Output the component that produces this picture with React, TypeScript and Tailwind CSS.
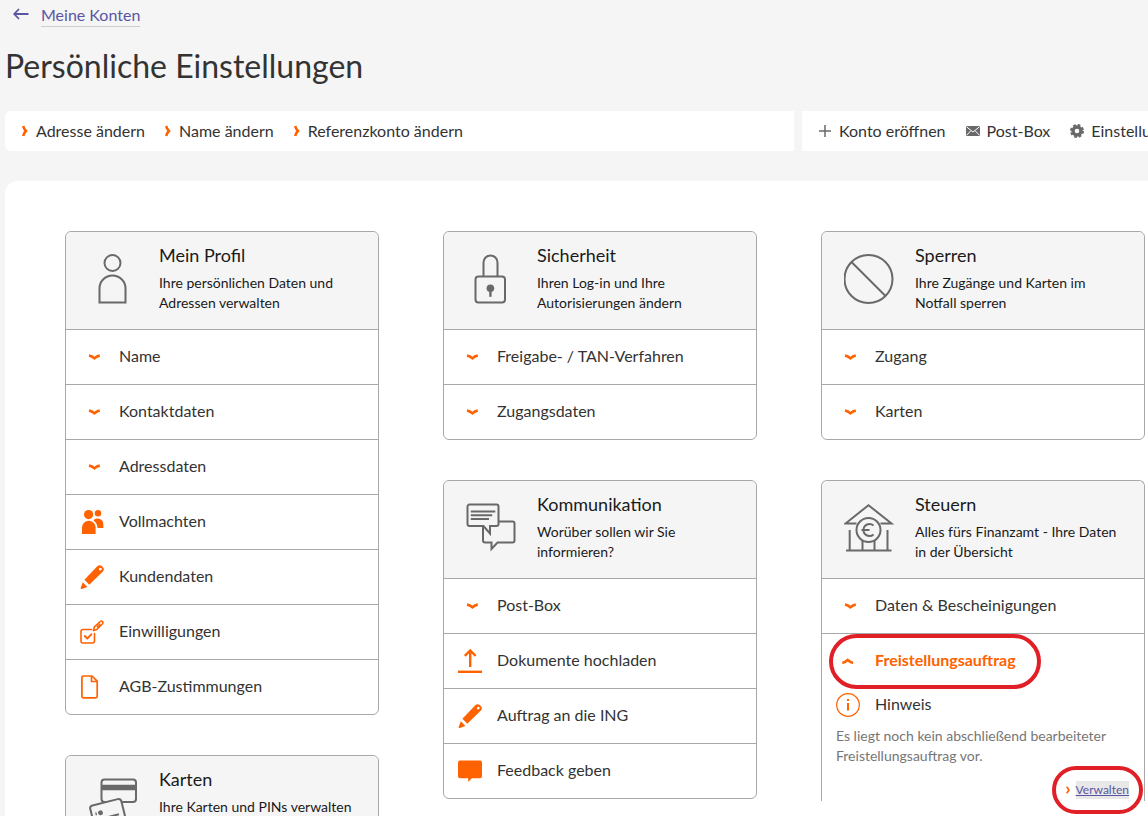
import { useState, type ReactNode } from "react";

function Pencil() {
	return (
		<svg viewBox="0 0 24 24" className="size-6 fill-[#ff6200]">
			<path fillRule="evenodd" d="M17.300 1.200c1.400-1.300 3.200-1.300 4.600-.1l.9.900c1.400 1.400 1.400 3.200.1 4.600L9.300 19.800l-4.900-5zM19.400 3.200a1.500 1.500 0 0 0-.1 2c.6.6 1.500.5 2-.1.500-.5.600-1.300.1-1.800-.6-.6-1.400-.7-2-.1z" />
			<path d="M2.800 17.300l4.600 4.600-5.500 2c-.9.300-1.500-.3-1.200-1.200z" />
		</svg>
	);
}

function People() {
	return (
		<svg viewBox="0 0 24 24" className="size-6 fill-[#ff6200]">
			<circle cx="8.600" cy="4.600" r="4.600" />
			<circle cx="18" cy="3.200" r="3.200" />
			<path d="M2 24v-6.500a6.800 6.800 0 0 1 13.600 0V24z" />
			<path d="M14 9.800c1-.9 2.400-1.400 3.800-1.400a5.500 5.500 0 0 1 5.500 5.500V18h-5.800c0-3.300-1.400-5.900-3.900-7.300z" />
		</svg>
	);
}

function Consent() {
	return (
		<svg viewBox="0 0 24 24" className="size-6 fill-none stroke-[#ff6200]" strokeWidth="1.600" strokeLinejoin="round" strokeLinecap="round">
			<path d="M11.500 9.500H3a2 2 0 0 0-2 2V21a2 2 0 0 0 2 2h9.500a2 2 0 0 0 2-2v-7.500" />
			<path d="M4.800 16l2.500 2.500 4-4.200" strokeWidth="1.900" />
			<path d="M13.400 10.600l1-3.800 5.900-5.300c.7-.6 1.500-.6 2.200 0 .7.700.7 1.500 0 2.200l-5.700 5.800z" />
			<path d="M17.300 6.800l2.500-2.400" />
		</svg>
	);
}

function Page() {
	return (
		<svg viewBox="0 0 24 24" className="size-6 fill-none stroke-[#ff6200]" strokeWidth="1.700" strokeLinejoin="round">
			<path d="M3.500 1H12l5.200 5.200v15c0 1-.6 1.600-1.600 1.600H3.500c-1 0-1.600-.6-1.600-1.600V2.600C1.900 1.600 2.500 1 3.500 1z" />
			<path d="M11.500 1.200v5.300h5.500" />
		</svg>
	);
}

function Upload() {
	return (
		<svg viewBox="0 0 24 24" className="size-6 fill-none stroke-[#ff6200]" strokeWidth="2.400">
			<path d="M12.200 18V1.500M6.800 6.800l5.400-5.300 5.400 5.300" />
			<path d="M0 22.800h24.500" />
		</svg>
	);
}

function Bubble() {
	return (
		<svg viewBox="0 0 24 24" className="size-6 fill-[#ff6200]">
			<path d="M2 1.500h20a2 2 0 0 1 2 2v13.800a2 2 0 0 1-2 2h-8.200L10.200 23v-3.700H2a2 2 0 0 1-2-2V3.500a2 2 0 0 1 2-2z" />
		</svg>
	);
}

function Info() {
	return (
		<svg viewBox="0 0 24 24" className="size-6 fill-none stroke-[#ff6200]">
			<circle cx="12" cy="12" r="11.300" strokeWidth="1.200" />
			<path d="M12 10v7.500M12 6v2" strokeWidth="2" />
		</svg>
	);
}

function Chevron({ up }: { up?: boolean }) {
	return (
		<svg viewBox="0 0 24 24" className="size-6 fill-none stroke-[#ff6200]" strokeWidth="2.600">
			{up ? <path d="M6.300 14c2.200-.5 3.800-1.500 5.400-2.900 1.600 1.400 3.200 2.400 5.400 2.900" /> : <path d="M9 10.600c2.200.5 3.800 1.400 5.400 2.700 1.600-1.300 3.200-2.200 5.400-2.700" />}
		</svg>
	);
}

function Arrow() {
	return (
		<svg viewBox="0 0 6 12" className="h-3 w-[6px] shrink-0 fill-none stroke-[#ff6200]" strokeWidth="2.600">
			<path d="M1.200 1c.4 2 1.200 3.500 2.700 5-1.500 1.500-2.300 3-2.700 5" />
		</svg>
	);
}

const headIcon = "size-[50px] shrink-0 fill-none stroke-[#696969]";

const icons = {
	profile: (
		<svg viewBox="0 0 50 50" className={headIcon} strokeWidth="2">
			<circle cx="24.500" cy="9" r="8" />
			<path d="M11.500 48.500V34.500a13 13 0 0 1 26 0v14z" />
		</svg>
	),
	lock: (
		<svg viewBox="0 0 50 50" className={headIcon} strokeWidth="2">
			<rect x="9.500" y="22.500" width="29.500" height="26" rx="3" />
			<path d="M17.500 22V8.500a7 7 0 0 1 14 0V22" />
			<circle cx="24.400" cy="34.300" r="3.800" fill="#696969" stroke="none" />
			<path d="M24.400 35v7.800" strokeWidth="2.400" />
		</svg>
	),
	block: (
		<svg viewBox="0 0 50 50" className={headIcon} strokeWidth="2">
			<circle cx="24.500" cy="25" r="24" />
			<path d="M7.500 8l34 34" />
		</svg>
	),
	chat: (
		<svg viewBox="0 0 50 50" className={headIcon} strokeWidth="2">
			<path d="M3.500 1.500h27a2 2 0 0 1 2 2v17.500a2 2 0 0 1-2 2h-6.500v7.500L17.500 23h-14a2 2 0 0 1-2-2V3.500a2 2 0 0 1 2-2z" />
			<path d="M33 18.500h13.500a2 2 0 0 1 2 2V37.500a2 2 0 0 1-2 2H31.500l-6 6.500v-6.500h-6.500a2 2 0 0 1-2-2V23.500" />
			<path d="M4.800 8.500h24.500M4.800 12.300h21.400M4.800 16h18.200" />
		</svg>
	),
	bank: (
		<svg viewBox="0 0 50 50" className={headIcon} strokeWidth="2">
			<path d="M12.500 20.500H1.500L24.500 2.200l23 18.300h-11" />
			<path d="M5.700 27v20.500M43.500 27v20.500M18.500 38v9.500M30.500 38v9.500" />
			<path d="M2 47.500h45.500" />
			<circle cx="24.500" cy="27" r="12" />
			<path d="M29.500 22.600a6 6 0 1 0 0 8.800M17.500 27h8" />
		</svg>
	),
	cards: (
		<svg viewBox="0 0 50 50" className={headIcon} strokeWidth="2">
			<rect x="13.500" y="1.500" width="34.500" height="22.500" rx="3" />
			<path d="M13.500 9.500h34.500" strokeWidth="5.500" />
			<g transform="rotate(-14 20 38)" className="fill-[#f5f5f5]">
				<rect x="4.500" y="24" width="32" height="23" rx="3" />
				<path d="M18 39h13" />
				<path d="M9 31.500v3" strokeWidth="1.200" />
				<circle cx="13.500" cy="33" r="2.400" fill="#696969" stroke="none" />
			</g>
		</svg>
	),
};

function Row({ icon, label }: { icon?: ReactNode; label: string }) {
	return (
		<button type="button" className="flex h-[55px] w-full cursor-pointer items-center gap-[15px] border-t border-[#a8a8a8] px-[14px] text-left text-base text-[#333]">
			{icon || <Chevron />}
			<span className="pb-[2px]">{label}</span>
		</button>
	);
}

function Card({ icon, title, text, children, open }: { icon: ReactNode; title: string; text: string; children?: ReactNode; open?: boolean }) {
	return (
		<section className={`border-[#a8a8a8] bg-white ${open ? "rounded-t-md border-x border-t" : "rounded-md border"}`}>
			<header className="flex h-[97px] gap-[21px] rounded-t-md bg-[#f5f5f5] pl-[22px] pr-4 pt-[11px]">
				<div className="pt-[11px]">{icon}</div>
				<div className="text-[#1a1a1a]">
					<h2 className="text-lg leading-6">{title}</h2>
					<p className="mt-[6px] text-sm leading-5">{text}</p>
				</div>
			</header>
			{children}
		</section>
	);
}

export default function App() {
	const [open, setOpen] = useState(true);

	return (
		<div className="flex h-screen flex-col overflow-hidden bg-[#f5f5f5] pl-[5px] font-['Lato',sans-serif] text-[#333]">
			<div className="flex h-7 items-start pl-2 pt-1">
				<a href="#konten" className="flex gap-3 text-base leading-[22px] text-[#5a55a3]">
					<svg viewBox="0 0 16 12" className="mt-1 h-3 w-4 fill-none stroke-[#5a55a3]" strokeWidth="1.800">
						<path d="M15.500 6H1.200M6 1L1.200 6 6 11" />
					</svg>
					<span className="border-b border-[#ccc]">Meine Konten</span>
				</a>
			</div>
			<h1 className="mt-4 text-[32px] leading-[44px]">Persönliche Einstellungen</h1>

			<div className="mt-[23px] flex gap-2">
				<nav className="flex h-10 flex-1 items-center gap-5 rounded-l-md bg-white pl-[17px]">
					{["Adresse ändern", "Name ändern", "Referenzkonto ändern"].map((label) => (
						<a key={label} href="#" className="flex items-center gap-2 whitespace-nowrap">
							<Arrow />
							{label}
						</a>
					))}
				</nav>
				<nav className="flex h-10 w-[346px] items-center gap-5 overflow-hidden bg-white pb-px pl-4">
					<a href="#" className="flex shrink-0 items-center gap-[7px]">
						<svg viewBox="0 0 14 14" className="size-[14px] stroke-[#696969]" strokeWidth="1.500">
							<path d="M7 1v12M1 7h12" />
						</svg>
						Konto eröffnen
					</a>
					<a href="#" className="flex shrink-0 items-center gap-[7px]">
						<svg viewBox="0 0 14 10" className="h-[10px] w-[14px]">
							<rect width="14" height="10" rx="1" fill="#696969" />
							<path d="M.5.800L7 6 13.500.800M.5 9.300l4.300-4.500M13.500 9.300L9.200 4.800" fill="none" stroke="#fff" />
						</svg>
						Post-Box
					</a>
					<a href="#" className="flex shrink-0 items-center gap-[7px]">
						<svg viewBox="0 0 14 14" className="size-[14px] fill-none stroke-[#696969]">
							<circle cx="7" cy="7" r="4" strokeWidth="3.400" />
							<circle cx="7" cy="7" r="6" strokeWidth="2" strokeDasharray="2.700 2.010" />
						</svg>
						Einstellungen
					</a>
				</nav>
			</div>

			<main className="mt-[30px] grid min-h-0 flex-1 grid-cols-[314fr_314fr_324fr] items-start gap-x-16 rounded-tl-xl bg-white pl-[60px] pr-[3px] pt-[50px]">
				<div className="grid gap-10">
					<Card icon={icons.profile} title="Mein Profil" text="Ihre persönlichen Daten und Adressen verwalten">
						<Row label="Name" />
						<Row label="Kontaktdaten" />
						<Row label="Adressdaten" />
						<Row icon={<People />} label="Vollmachten" />
						<Row icon={<Pencil />} label="Kundendaten" />
						<Row icon={<Consent />} label="Einwilligungen" />
						<Row icon={<Page />} label="AGB-Zustimmungen" />
					</Card>
					<Card icon={icons.cards} title="Karten" text="Ihre Karten und PINs verwalten" />
				</div>

				<div className="grid gap-10">
					<Card icon={icons.lock} title="Sicherheit" text="Ihren Log-in und Ihre Autorisierungen ändern">
						<Row label="Freigabe- / TAN-Verfahren" />
						<Row label="Zugangsdaten" />
					</Card>
					<Card icon={icons.chat} title="Kommunikation" text="Worüber sollen wir Sie informieren?">
						<Row label="Post-Box" />
						<Row icon={<Upload />} label="Dokumente hochladen" />
						<Row icon={<Pencil />} label="Auftrag an die ING" />
						<Row icon={<Bubble />} label="Feedback geben" />
					</Card>
				</div>

				<div className="grid gap-10">
					<Card icon={icons.block} title="Sperren" text="Ihre Zugänge und Karten im Notfall sperren">
						<Row label="Zugang" />
						<Row label="Karten" />
					</Card>
					<Card open icon={icons.bank} title="Steuern" text="Alles fürs Finanzamt - Ihre Daten in der Übersicht">
						<Row label="Daten & Bescheinigungen" />
						<div className="relative border-t border-[#a8a8a8]">
							<button type="button" aria-expanded={open} onClick={() => setOpen(!open)} className="flex h-[54px] w-full cursor-pointer items-center gap-[15px] px-[14px] font-bold text-[#ff6200]">
								<Chevron up={open} />
								<span className="pb-[2px]">Freistellungsauftrag</span>
							</button>
							<span className="pointer-events-none absolute left-[7px] top-0 h-[55px] w-[212px] rounded-full border-4 border-[#e01f26]" />
							{open && (
								<div className="px-[14px] pt-1">
									<div className="flex items-center gap-[15px]">
										<Info />
										<h3 className="pb-[2px]">Hinweis</h3>
									</div>
									<p className="mt-2 text-sm leading-5 text-[#767676]">Es liegt noch kein abschließend bearbeiteter Freistellungsauftrag vor.</p>
									<div className="mt-[15px] flex justify-end pb-[2px] pr-px">
										<a href="#verwalten" className="relative flex items-center gap-[6px] text-xs leading-[18px] text-[#5a55a3]">
											<svg viewBox="0 0 6 12" className="h-2 w-1 fill-none stroke-[#ff6200]" strokeWidth="2.500">
												<path d="M1 1l3.500 5L1 11" />
											</svg>
											<span className="bg-[#e8e8e8] underline">Verwalten</span>
											<span className="pointer-events-none absolute -inset-x-[14px] -inset-y-[15px] rounded-full border-4 border-[#e01f26]" />
										</a>
									</div>
								</div>
							)}
						</div>
					</Card>
				</div>
			</main>
		</div>
	);
}
